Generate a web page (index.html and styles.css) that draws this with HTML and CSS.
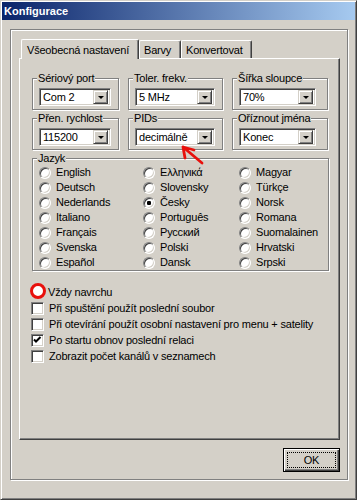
FILE: index.html
```html
<!DOCTYPE html>
<html>
<head>
<meta charset="utf-8">
<title>Konfigurace</title>
<link rel="stylesheet" href="styles.css">
</head>
<body>
<div class="window">
  <div class="titlebar">Konfigurace</div>
  <div class="frame">
    <div class="tabs">
      <div class="tab active t1">Všeobecná nastavení</div>
      <div class="tab t2">Barvy</div>
      <div class="tab t3">Konvertovat</div>
    </div>
    <div class="panel">
      <div class="combos">
        <div class="group">
          <div class="legend">Sériový port</div>
          <div class="combo c1"><span class="val">Com 2</span><span class="drop"><i></i></span></div>
        </div>
        <div class="group">
          <div class="legend">Toler. frekv.</div>
          <div class="combo c2"><span class="val">5 MHz</span><span class="drop"><i></i></span></div>
        </div>
        <div class="group">
          <div class="legend">Šířka sloupce</div>
          <div class="combo c3"><span class="val">70%</span><span class="drop"><i></i></span></div>
        </div>
        <div class="group">
          <div class="legend">Přen. rychlost</div>
          <div class="combo c1"><span class="val">115200</span><span class="drop"><i></i></span></div>
        </div>
        <div class="group">
          <div class="legend">PIDs</div>
          <div class="combo c2"><span class="val">decimálně</span><span class="drop"><i></i></span></div>
        </div>
        <div class="group">
          <div class="legend">Oříznout jména</div>
          <div class="combo c3"><span class="val">Konec</span><span class="drop"><i></i></span></div>
        </div>
      </div>

      <div class="group lang">
        <div class="legend">Jazyk</div>
        <div class="langs">
          <div class="opt"><span class="radio"></span>English</div>
          <div class="opt"><span class="radio"></span>Deutsch</div>
          <div class="opt"><span class="radio"></span>Nederlands</div>
          <div class="opt"><span class="radio"></span>Italiano</div>
          <div class="opt"><span class="radio"></span>Français</div>
          <div class="opt"><span class="radio"></span>Svenska</div>
          <div class="opt"><span class="radio"></span>Español</div>
          <div class="opt"><span class="radio"></span>Ελληνικά</div>
          <div class="opt"><span class="radio"></span>Slovensky</div>
          <div class="opt"><span class="radio on"></span>Česky</div>
          <div class="opt"><span class="radio"></span>Português</div>
          <div class="opt"><span class="radio"></span>Русский</div>
          <div class="opt"><span class="radio"></span>Polski</div>
          <div class="opt"><span class="radio"></span>Dansk</div>
          <div class="opt"><span class="radio"></span>Magyar</div>
          <div class="opt"><span class="radio"></span>Türkçe</div>
          <div class="opt"><span class="radio"></span>Norsk</div>
          <div class="opt"><span class="radio"></span>Romana</div>
          <div class="opt"><span class="radio"></span>Suomalainen</div>
          <div class="opt"><span class="radio"></span>Hrvatski</div>
          <div class="opt"><span class="radio"></span>Srpski</div>
        </div>
      </div>

      <div class="options">
        <div class="row"><span class="ring"></span>Vždy navrchu</div>
        <div class="row"><span class="check"></span>Při spuštění použít poslední soubor</div>
        <div class="row"><span class="check"></span>Při otevírání použít osobní nastavení pro menu + satelity</div>
        <div class="row"><span class="check"><svg width="11" height="11" viewBox="0 0 11 11"><path d="M2 4.5 L4 6.5 L8.5 2" fill="none" stroke="#000" stroke-width="2"/></svg></span>Po startu obnov poslední relaci</div>
        <div class="row"><span class="check"></span>Zobrazit počet kanálů v seznamech</div>
      </div>

      <svg class="arrow" width="26" height="22" viewBox="0 0 26 22">
        <path d="M3 2 L22 18 M3 2 L14 5 M3 2 L5 13" fill="none" stroke="#e8100c" stroke-width="2.8" stroke-linecap="round"/>
      </svg>
    </div>
    <div class="buttons">
      <div class="btn-ok"><span>OK</span></div>
    </div>
  </div>
</div>
</body>
</html>
```

FILE: styles.css
```css
*{
  margin:0;
  padding:0;
  box-sizing:border-box;
}
body{
  background:#d4d0c8;
  font-family:"Liberation Sans", Arial, sans-serif;
  font-size:11px;
  line-height:13px;
  color:#000;
  letter-spacing:-0.2px;
}
.window{
  width:357px;
  height:500px;
  padding:1px;
  background:#d4d0c8;
  border:1px solid;
  border-color:#d4d0c8 #404040 #404040 #d4d0c8;
  box-shadow:inset 1px 1px 0 #fff, inset -1px -1px 0 #808080;
  overflow:hidden;
}
.titlebar{
  height:18px;
  padding-left:2px;
  background:linear-gradient(to right, #0a246a, #a6caf0);
  color:#fff;
  font-weight:bold;
  letter-spacing:0;
  line-height:18px;
}
.frame{
  width:338px;
  height:451px;
  margin:9px 0 0 8px;
  padding:9px 7px 0 8px;
  border:1px solid #808080;
  box-shadow:inset 1px 1px 0 #fff, 1px 1px 0 #fff;
}
/* tabs */
.tabs{
  display:flex;
  align-items:flex-end;
  height:19px;
  padding-left:2px;
}
.tab{
  height:18px;
  padding:3px 0 0 4px;
  background:#d4d0c8;
  border-left:1px solid #fff;
  border-top:1px solid #fff;
  border-right:1px solid #404040;
  box-shadow:inset -1px 0 0 #808080;
  border-radius:2px 2px 0 0;
}
.tab.active{
  height:20px;
  margin-bottom:-1px;
  padding-top:4px;
  padding-left:5px;
  position:relative;
  z-index:1;
}
.t1{ width:118px; }
.t2{ width:42px; }
.t3{ width:71px; }
.panel{
  position:relative;
  height:382px;
  padding:19px 10px 0 12px;
  border-left:1px solid #fff;
  border-top:1px solid #fff;
  border-right:1px solid #404040;
  border-bottom:1px solid #404040;
  box-shadow:inset -1px -1px 0 #808080;
}
/* group boxes */
.combos{
  display:grid;
  grid-template-columns:87px 95px 96px;
  grid-auto-rows:32px;
  column-gap:9px;
  row-gap:8px;
}
.group{
  border:1px solid #808080;
  box-shadow:inset 1px 1px 0 #fff, 1px 1px 0 #fff;
}
.legend{
  display:table;
  margin:-7px 0 0 4px;
  padding:0 1px;
  background:#d4d0c8;
}
.combo{
  display:flex;
  height:18px;
  margin:3px 0 0 6px;
  background:#fff;
  border:1px solid;
  border-color:#808080 #fff #fff #808080;
  box-shadow:inset 1px 1px 0 #404040, inset -1px -1px 0 #d4d0c8;
  padding:2px 2px 2px 3px;
}
.c1{ width:72px; }
.c2{ width:80px; }
.c3{ width:77px; }
.val{
  flex:1;
  line-height:13px;
  white-space:nowrap;
  overflow:hidden;
}
.drop{
  width:15px;
  height:14px;
  margin-top:-1px;
  display:flex;
  align-items:center;
  justify-content:center;
  background:#d4d0c8;
  border:1px solid;
  border-color:#d4d0c8 #404040 #404040 #d4d0c8;
  box-shadow:inset 1px 1px 0 #fff, inset -1px -1px 0 #808080;
}
.drop i{
  width:0;
  height:0;
  border-top:3px solid #000;
  border-left:3px solid transparent;
  border-right:3px solid transparent;
}
/* languages */
.lang{
  margin-top:8px;
}
.langs{
  display:grid;
  grid-template-columns:104px 96px 1fr;
  grid-template-rows:repeat(7, 15px);
  grid-auto-flow:column;
  padding-left:6px;
}
.opt{
  display:flex;
  align-items:center;
  white-space:nowrap;
}
.radio{
  width:12px;
  height:12px;
  margin-right:5px;
  border:1px solid;
  border-color:#808080 #fff #fff #808080;
  border-radius:50%;
  background:#fff;
  box-shadow:inset 1px 1px 0 #404040, inset -1px -1px 0 #d4d0c8;
}
.radio.on{
  background:radial-gradient(circle, #000 0, #000 2px, #fff 2.4px);
}
/* options */
.options{
  margin:13px 0 0 -1px;
}
.row{
  display:flex;
  align-items:center;
  height:16px;
  white-space:nowrap;
}
.check{
  width:13px;
  height:13px;
  margin-right:5px;
  border:1px solid;
  border-color:#808080 #fff #fff #808080;
  background:#fff;
  box-shadow:inset 1px 1px 0 #404040, inset -1px -1px 0 #d4d0c8;
  display:flex;
  align-items:center;
  justify-content:center;
}
.ring{
  width:16px;
  height:16px;
  margin:-2px 2px 0 -1px;
  border:3px solid #e8100c;
  border-radius:50%;
  background:#fff;
}
.arrow{
  position:absolute;
  left:160px;
  top:86px;
}
/* button */
.buttons{
  display:flex;
  justify-content:flex-end;
  margin-top:8px;
}
.btn-ok{
  width:57px;
  height:24px;
  display:flex;
  padding:3px;
  border:1px solid #000;
  box-shadow:inset 1px 1px 0 #fff, inset -1px -1px 0 #404040, inset -2px -2px 0 #808080;
}
.btn-ok span{
  flex:1;
  display:flex;
  align-items:center;
  justify-content:center;
  border:1px dotted #000;
}
```
